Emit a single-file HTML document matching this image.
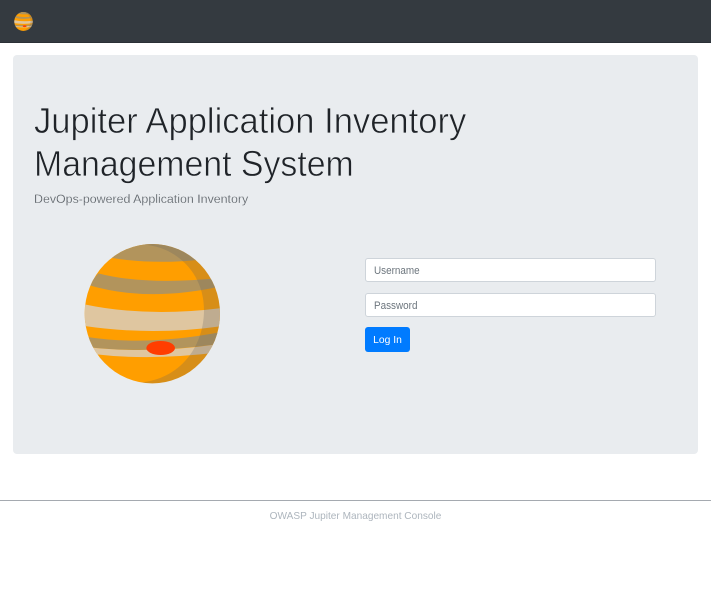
<!DOCTYPE html>
<html><head><meta charset="utf-8"><title>Jupiter</title>
<style>
html,body{margin:0;padding:0;background:#fff;width:711px;height:599px;overflow:hidden;font-family:"Liberation Sans",sans-serif}
div,svg,span{position:absolute;box-sizing:border-box}
.t{white-space:nowrap}
.nav{left:0;top:0;width:711px;height:43px;background:#343a40;border-bottom:1px solid #2b3036}
.jumbo{left:13px;top:55px;width:685px;height:399px;background:#e9ecef;border-radius:4px}
.h{left:34px;font-size:36px;line-height:45px;color:#1f2328;-webkit-text-stroke:.65px #e9ecef;transform:scaleX(.96);transform-origin:0 0}
.in{left:365px;width:291px;height:24px;background:#fff;border:1px solid #ced4da;border-radius:3px;color:#6c757d}
.in span{left:8px;top:5px;font-size:11px;line-height:14px;transform:scaleX(.9);transform-origin:0 0}
.btn{left:365px;top:327px;width:45px;height:25px;background:#007bff;border-radius:3px;color:#fff;font-size:10.300px;line-height:27px;text-align:center}
</style></head><body>
<div class="nav"></div>
<svg style="left:14px;top:12px" width="19" height="19" viewBox="44 42 406 418">
<defs><clipPath id="a"><ellipse cx="247" cy="251" rx="203" ry="209"/></clipPath></defs>
<g clip-path="url(#a)">
<rect width="495" height="495" fill="#ff9e00"/>
<path d="M100 30H400V88Q250 105 120 83Z" fill="#b2945c"/>
<path d="M85 130Q230 168 470 142V165Q240 220 55 165Z" fill="#b2945c"/>
<path d="M30 220Q230 265 470 232V286Q250 320 30 286Z" fill="#dfc6a0"/>
<path d="M45 320Q230 350 460 305V340Q240 372 60 352Z" fill="#b2945c"/>
<path d="M60 352Q240 372 440 343V368Q240 392 80 373Z" fill="#dfc6a0"/>
<ellipse cx="272" cy="354" rx="43" ry="21" fill="#ff3d00"/>
<path d="M220 30H480V480H205V458C330 450 402 350 402 240C402 130 320 50 220 44Z" fill="#5e5e5e" fill-opacity=".25"/>
</g></svg>
<div class="jumbo"></div>
<div class="t h" style="top:98px">Jupiter Application Inventory</div>
<div class="t h" style="top:141px;transform:scaleX(.94)">Management System</div>
<div class="t" style="left:34px;top:191px;font-size:12.400px;line-height:17px;color:#555b61;-webkit-text-stroke:.2px #e9ecef">DevOps-powered Application Inventory</div>
<svg style="left:70px;top:230px" width="165" height="165" viewBox="0 0 495 495">
<defs><clipPath id="p"><ellipse cx="247" cy="251" rx="203" ry="209"/></clipPath></defs>
<g clip-path="url(#p)">
<rect width="495" height="495" fill="#ff9e00"/>
<path d="M100 30H400V88Q250 105 120 83Z" fill="#b2945c"/>
<path d="M85 130Q230 168 470 142V165Q240 220 55 165Z" fill="#b2945c"/>
<path d="M30 220Q230 265 470 232V286Q250 320 30 286Z" fill="#dfc6a0"/>
<path d="M45 320Q230 350 460 305V340Q240 372 60 352Z" fill="#b2945c"/>
<path d="M60 352Q240 372 440 343V368Q240 392 80 373Z" fill="#dfc6a0"/>
<ellipse cx="272" cy="354" rx="43" ry="21" fill="#ff3d00"/>
<path d="M220 30H480V480H205V458C330 450 402 350 402 240C402 130 320 50 220 44Z" fill="#5e5e5e" fill-opacity=".25"/>
</g></svg>
<div class="in t" style="top:258px"><span>Username</span></div>
<div class="in t" style="top:293px"><span>Password</span></div>
<div class="btn t">Log In</div>
<div style="left:0;top:500px;width:711px;height:1px;background:#a5aab0"></div>
<div class="t" style="left:0;top:509px;width:711px;text-align:center;font-size:10.100px;line-height:15px;color:#adb5bd">OWASP Jupiter Management Console</div>
</body></html>
